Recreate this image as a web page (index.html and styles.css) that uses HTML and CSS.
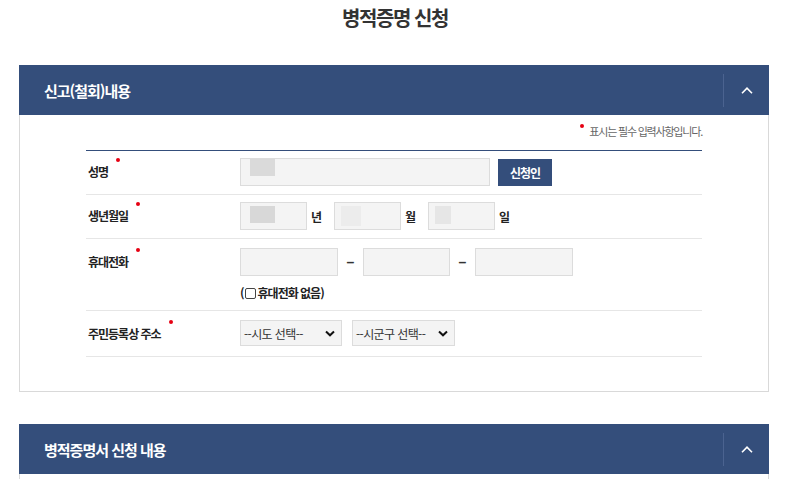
FILE: index.html
```html
<!DOCTYPE html>
<html lang="ko">
<head>
    <meta charset="UTF-8">
    <meta name="viewport" content="width=device-width, initial-scale=1.0">
    <title>병적증명 신청</title>
    <link rel="stylesheet" href="styles.css">
</head>
<body>
    <h1 class="page-title">병적증명 신청</h1>

    <div class="wrap">
        <!-- 신고(철회)내용 -->
        <section class="panel">
            <div class="panel-head">
                <h2 class="panel-title">신고(철회)내용</h2>
                <button class="panel-toggle" type="button" aria-label="접기">
                    <svg width="12" height="7" viewBox="0 0 12 7"><path d="M1 6.2 L6 1.2 L11 6.2" fill="none" stroke="#fff" stroke-width="1.6"/></svg>
                </button>
            </div>
            <div class="panel-body">
                <p class="note"><span class="req-dot"></span>표시는 필수 입력사항입니다.</p>

                <div class="form-table">
                    <div class="form-row">
                        <div class="form-label req">성명</div>
                        <div class="form-field">
                            <input class="inp inp-name mask-name" type="text">
                            <button class="btn-navy" type="button">신청인</button>
                        </div>
                    </div>
                    <div class="form-row">
                        <div class="form-label req">생년월일</div>
                        <div class="form-field">
                            <input class="inp inp-date mask-year" type="text"><span class="unit">년</span>
                            <input class="inp inp-date mask-month" type="text"><span class="unit">월</span>
                            <input class="inp inp-date mask-day" type="text"><span class="unit">일</span>
                        </div>
                    </div>
                    <div class="form-row row-tel">
                        <div class="form-label req">휴대전화</div>
                        <div class="form-field stack">
                            <div class="phone">
                                <input class="inp inp-tel1" type="text"><span class="dash">–</span>
                                <input class="inp inp-tel2" type="text"><span class="dash">–</span>
                                <input class="inp inp-tel1" type="text">
                            </div>
                            <label class="check">(<input type="checkbox">휴대전화 없음)</label>
                        </div>
                    </div>
                    <div class="form-row row-addr">
                        <div class="form-label req">주민등록상 주소</div>
                        <div class="form-field">
                            <div class="select sel-sido"><span>--시도 선택--</span>
                                <svg width="10" height="7" viewBox="0 0 10 7"><path d="M1 1.5 L5 5.3 L9 1.5" fill="none" stroke="#111" stroke-width="2"/></svg>
                            </div>
                            <div class="select sel-sigungu"><span>--시군구 선택--</span>
                                <svg width="10" height="7" viewBox="0 0 10 7"><path d="M1 1.5 L5 5.3 L9 1.5" fill="none" stroke="#111" stroke-width="2"/></svg>
                            </div>
                        </div>
                    </div>
                </div>
            </div>
        </section>

        <!-- 병적증명서 신청 내용 -->
        <section class="panel">
            <div class="panel-head">
                <h2 class="panel-title">병적증명서 신청 내용</h2>
                <button class="panel-toggle" type="button" aria-label="접기">
                    <svg width="12" height="7" viewBox="0 0 12 7"><path d="M1 6.2 L6 1.2 L11 6.2" fill="none" stroke="#fff" stroke-width="1.6"/></svg>
                </button>
            </div>
            <div class="panel-body empty"></div>
        </section>
    </div>
</body>
</html>
```

FILE: styles.css
```css
body {
    margin: 0;
    font-family: "Noto Sans CJK KR", "Noto Sans", sans-serif;
    color: #222;
    background-color: #fff;
}

.page-title {
    margin: 0;
    padding-top: 6px;
    font-size: 20px;
    line-height: 24px;
    font-weight: bold;
    letter-spacing: -1.4px;
    text-align: center;
    color: #333;
}

.wrap {
    width: 750px;
    margin: 35px 0 0 19px;
}

.panel + .panel {
    margin-top: 32px;
}

.panel-head {
    display: flex;
    align-items: center;
    height: 50px;
    background-color: #344e7b;
}

.panel-title {
    margin: 0 0 0 25px;
    font-size: 15px;
    font-weight: bold;
    letter-spacing: -1px;
    color: #fff;
}

.panel-toggle {
    display: flex;
    align-items: center;
    justify-content: center;
    margin-left: auto;
    width: 46px;
    height: 33px;
    padding: 0;
    border: none;
    border-left: 1px solid #4b6390;
    background: none;
    cursor: pointer;
}

.panel-body {
    border: 1px solid #d9d9d9;
    border-top: none;
    padding: 0 66px 34px 66px;
}

.panel-body.empty {
    height: 40px;
    padding: 0;
}

.note {
    margin: 0;
    padding: 8px 0 11px;
    font-size: 11px;
    line-height: 16px;
    letter-spacing: -1.2px;
    text-align: right;
    color: #666;
}

.req-dot {
    display: inline-block;
    width: 4px;
    height: 4px;
    margin-right: 5px;
    border-radius: 50%;
    background-color: #e60012;
    vertical-align: 8px;
}

.form-table {
    border-top: 1px solid #344e7b;
}

.form-row {
    display: flex;
    align-items: flex-start;
    padding: 7px 0 8px;
    border-bottom: 1px solid #e6e6e6;
}

.form-row.row-tel {
    padding-top: 9px;
}

.form-row.row-addr {
    padding: 9px 0;
}

.form-label {
    width: 152px;
    padding-left: 2px;
    font-size: 12px;
    line-height: 28px;
    font-weight: bold;
    letter-spacing: -1px;
}

.row-addr .form-label {
    line-height: 26px;
}

.form-label.req::after {
    content: "";
    display: inline-block;
    width: 4px;
    height: 4px;
    margin-left: 8px;
    border-radius: 50%;
    background-color: #e60012;
    vertical-align: 15px;
}

.form-field {
    display: flex;
    align-items: center;
}

.form-field.stack {
    flex-direction: column;
    align-items: flex-start;
}

.inp {
    box-sizing: border-box;
    height: 28px;
    margin: 0;
    padding: 0 6px;
    border: 1px solid #dcdcdc;
    background-color: #f4f4f4;
    font-family: inherit;
}

.inp-name { width: 250px; }
.inp-date { width: 67px; }
.inp-tel1 { width: 98px; }
.inp-tel2 { width: 87px; }

/* 가려진 개인정보 흔적 */
.mask-name { background: linear-gradient(#dadada, #dadada) no-repeat 9px 0 / 25px 17px, #f4f4f4; }
.mask-year { background: linear-gradient(#d8d8d8, #d8d8d8) no-repeat 9px 3px / 25px 17px, #f4f4f4; }
.mask-month { background: linear-gradient(#ececec, #ececec) no-repeat 6px 3px / 20px 20px, #f4f4f4; }
.mask-day { background: linear-gradient(#e6e6e6, #e6e6e6) no-repeat 6px 3px / 16px 18px, #f4f4f4; }

.btn-navy {
    width: 54px;
    height: 27px;
    margin-left: 8px;
    padding: 0;
    border: none;
    background-color: #344e7b;
    color: #fff;
    font-family: inherit;
    font-size: 12px;
    font-weight: bold;
    letter-spacing: -1px;
    cursor: pointer;
}

.unit {
    margin: 0 12px 0 4px;
    font-size: 12px;
    font-weight: bold;
}

.phone {
    display: flex;
    align-items: center;
}

.dash {
    width: 25px;
    text-align: center;
    font-family: "Liberation Sans", sans-serif;
    font-size: 14px;
    font-weight: bold;
    color: #333;
}

.check {
    display: flex;
    align-items: center;
    margin-top: 8px;
    font-size: 12px;
    line-height: 18px;
    font-weight: bold;
    letter-spacing: -1px;
}

.check input {
    appearance: none;
    width: 11px;
    height: 11px;
    margin: 0 2px 0 1px;
    border: 1px solid #444;
    border-radius: 2px;
    background-color: #fff;
}

.select {
    box-sizing: border-box;
    display: flex;
    align-items: center;
    justify-content: space-between;
    height: 26px;
    padding: 0 6px 0 3px;
    border: 1px solid #dcdcdc;
    background-color: #f4f4f4;
    font-size: 12px;
    letter-spacing: -0.6px;
    color: #333;
}

.sel-sido { width: 102px; }
.sel-sigungu { width: 103px; margin-left: 10px; }
```
